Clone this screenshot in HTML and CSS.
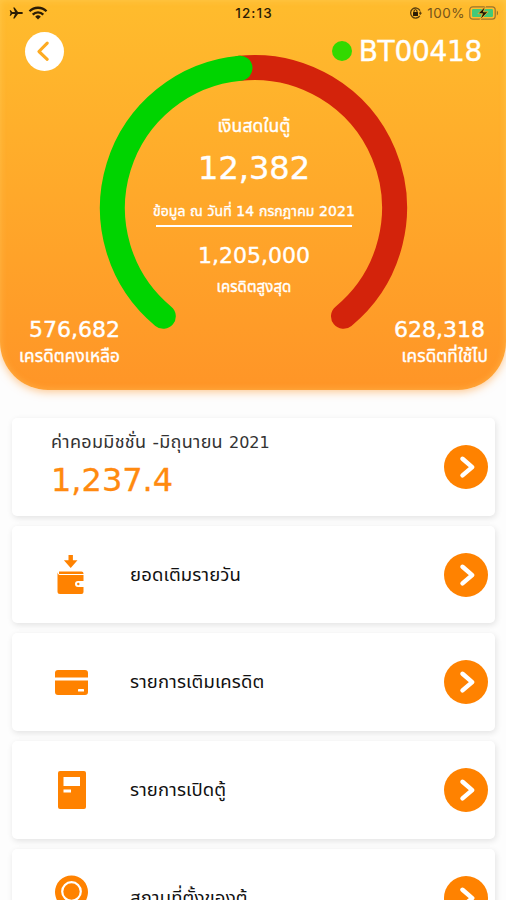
FILE: index.html
```
<!DOCTYPE html>
<html lang="th">

<head>
    <meta charset="UTF-8">
    <meta name="viewport" content="width=device-width, initial-scale=1.0">
    <title>BT00418</title>
    <link rel="stylesheet" href="styles.css">
</head>

<body>
    <header class="header">
        <div class="status-bar">
            <div class="status-left">
                <svg width="15" height="12" viewBox="0 0 15 12"><path d="M14 6C14 5.3 13 5 12 5H9L5.6.5H4.2L6 5H3.2L1.8 3.3H.7L1.5 6 .7 8.7h1.1L3.2 7H6l-1.8 4.5h1.4L9 7h3c1 0 2-.3 2-1z" fill="#2b1c05"/></svg>
                <svg width="20" height="14" viewBox="0 0 20 14" fill="none" stroke="#2b1c05" stroke-width="2.3"><path d="M1.5 5.3a12 12 0 0 1 17 0M4.7 8.6a7.5 7.5 0 0 1 10.6 0"/><path d="M7.2 10.7a4 4 0 0 1 5.6 0L10 13.5z" fill="#2b1c05" stroke="none"/></svg>
            </div>
            <div class="clock">12:13</div>
            <div class="status-right">
                <svg width="14" height="12" viewBox="0 0 14 12"><path d="M10.8 8.8a5 5 0 1 1 .2-5.2M11.3 4.6v3" fill="none" stroke="#5b400e" stroke-width="1.3"/><path d="M9.6 5.7h3.6l-1.8 2.1z" fill="#5b400e"/><rect x="4" y="5" width="5" height="4" rx=".6" fill="#2b1c05"/><path d="M5 5.5V4.2a1.5 1.5 0 0 1 3 0v1.3" fill="none" stroke="#2b1c05"/></svg>
                <span class="percent">100%</span>
                <svg width="30" height="14" viewBox="0 0 30 14"><rect x=".8" y=".8" width="25.4" height="12.4" rx="3" fill="none" stroke="#9b742b" stroke-width="1.2"/><rect x="3" y="3" width="21" height="8" rx="1.2" fill="#43c977"/><path d="M27.8 4.5c1.7.8 1.7 4.2 0 5z" fill="#9b742b"/><path d="M16.6 0 9 7.7h4.5L11 14l8-8.2h-4.6z" fill="#1b1608" stroke="#ffba2d" stroke-width=".8"/></svg>
            </div>
        </div>

        <div class="title-row">
            <button class="back-btn" aria-label="back">
                <svg width="39" height="39" viewBox="0 0 40 40"><path d="M22.8 11.5 14.3 20l8.5 8" fill="none" stroke="#fdab22" stroke-width="3.2" stroke-linecap="round" stroke-linejoin="round"/></svg>
            </button>
            <div class="machine"><span class="online-dot"></span><span class="machine-id">BT00418</span></div>
        </div>

        <div class="gauge">
            <svg class="gauge-ring" width="306" height="274" viewBox="0 0 306 274" fill="none" stroke-width="25" stroke-linecap="round">
                <path d="M139 13.2A140.5 140.5 0 0 1 242.5 261.3" stroke="#d3230b"/>
                <path d="M62.3 261.3A140.5 140.5 0 0 1 139 13.2" stroke="#00d400"/>
            </svg>
            <div class="gauge-info">
                <p class="cash-label">เงินสดในตู้</p>
                <p class="cash">12,382</p>
                <p class="date">ข้อมูล ณ วันที่ 14 กรกฎาคม 2021</p>
                <p class="limit">1,205,000</p>
                <p class="limit-label">เครดิตสูงสุด</p>
            </div>
        </div>

        <div class="credits">
            <div class="credit">
                <p class="credit-value">576,682</p>
                <p class="credit-label">เครดิตคงเหลือ</p>
            </div>
            <div class="credit">
                <p class="credit-value used-value">628,318</p>
                <p class="credit-label">เครดิตที่ใช้ไป</p>
            </div>
        </div>
    </header>

    <main class="menu">
        <div class="card">
            <div class="commission">
                <p class="commission-label">ค่าคอมมิชชั่น -มิถุนายน <span class="year">2021</span></p>
                <p class="commission-value">1,237.4</p>
            </div>
            <svg class="arrow" viewBox="0 0 44 44"><circle cx="22" cy="22" r="22"/><path d="m18.5 13.8 9.7 8.3-9.7 8.3"/></svg>
        </div>
        <div class="card">
            <svg class="icon" width="36" height="44" viewBox="0 0 36 44" fill="#ff8200"><path d="M15.5 2h4.4v5.3h4.6L17.7 15l-6.8-7.7h4.6z"/><path d="M6 18.5h22.5a2 2 0 0 1 2 2v.6H6z"/><path d="M4.5 19v19.5A2.5 2.5 0 0 0 7 41h21.5a2 2 0 0 0 2-2v-5H25a3 3 0 0 1 0-6h5.5v-6H7c-1.5 0-2.5-1.5-2.5-3z"/><circle cx="25.3" cy="31" r="1.2"/></svg>
            <span class="card-text">ยอดเติมรายวัน</span>
            <svg class="arrow" viewBox="0 0 44 44"><circle cx="22" cy="22" r="22"/><path d="m18.5 13.8 9.7 8.3-9.7 8.3"/></svg>
        </div>
        <div class="card">
            <svg class="icon" width="36" height="44" viewBox="0 0 36 44" fill="#ff8200"><path d="M5 10h27a3 3 0 0 1 3 3v4.5H2V13a3 3 0 0 1 3-3zM2 20.5h33V32a3 3 0 0 1-3 3H5a3 3 0 0 1-3-3z"/><rect x="25" y="29" width="6" height="2.5" rx=".5" fill="#fff"/></svg>
            <span class="card-text">รายการเติมเครดิต</span>
            <svg class="arrow" viewBox="0 0 44 44"><circle cx="22" cy="22" r="22"/><path d="m18.5 13.8 9.7 8.3-9.7 8.3"/></svg>
        </div>
        <div class="card">
            <svg class="icon" width="36" height="44" viewBox="0 0 36 44"><rect x="5" y="3" width="28" height="38" rx="2" fill="#ff8200"/><path d="M10.5 9H27v9H10.5zM10.5 21.5H18v3h-7.5z" fill="#fff"/></svg>
            <span class="card-text">รายการเปิดตู้</span>
            <svg class="arrow" viewBox="0 0 44 44"><circle cx="22" cy="22" r="22"/><path d="m18.5 13.8 9.7 8.3-9.7 8.3"/></svg>
        </div>
        <div class="card">
            <svg class="icon" width="36" height="44" viewBox="0 0 36 44"><path d="M18.5-.5A16.5 16.5 0 0 1 35 16C35 27 24 36 18.5 44 13 36 2 27 2 16A16.5 16.5 0 0 1 18.5-.5z" fill="#ff8200"/><circle cx="18.5" cy="15.5" r="9.3" fill="none" stroke="#fff" stroke-width="2.2"/></svg>
            <span class="card-text">สถานที่ตั้งของตู้</span>
            <svg class="arrow" viewBox="0 0 44 44"><circle cx="22" cy="22" r="22"/><path d="m18.5 13.8 9.7 8.3-9.7 8.3"/></svg>
        </div>
    </main>
</body>

</html>
```
FILE: styles.css
```
* {
    box-sizing: border-box;
}

body {
    margin: 0;
    height: 900px;
    overflow: hidden;
    background: #fdfdfd;
    color: #222;
    font-family: "DejaVu Sans", "Noto Sans", "Noto Sans Thai", sans-serif;
}

p {
    margin: 0;
    white-space: nowrap;
}

svg {
    display: block;
    flex-shrink: 0;
    overflow: visible;
}

.header {
    height: 390px;
    border-radius: 0 0 48px 48px;
    background: linear-gradient(#ffbc2d, #ff9527);
    box-shadow: 0 2px 9px rgba(255, 149, 39, 0.5), inset 0 0 7px rgba(255, 220, 120, 0.4);
    color: #fff;
    -webkit-text-stroke: 0.4px;
}

.status-bar {
    display: grid;
    grid-template-columns: 1fr auto 1fr;
    align-items: center;
    height: 26px;
    padding: 0 7px 0 9px;
    color: #2b1c05;
    -webkit-text-stroke: 0;
}

.status-left,
.status-right {
    display: flex;
    align-items: center;
    gap: 4px;
}

.status-right {
    justify-content: flex-end;
}

.clock {
    font: 500 13.5px/26px Inter, sans-serif;
    letter-spacing: 1.1px;
}

.percent {
    font: 13.5px/26px Inter, sans-serif;
    letter-spacing: 0.5px;
    color: #76531a;
}

.title-row {
    display: flex;
    align-items: center;
    justify-content: space-between;
    height: 50px;
    padding: 0 24px 0 25px;
}

.back-btn {
    width: 39px;
    height: 39px;
    padding: 0;
    border: none;
    border-radius: 50%;
    background: #fff;
}

.machine {
    display: flex;
    align-items: center;
    gap: 7px;
}

.online-dot {
    width: 20px;
    height: 20px;
    border-radius: 50%;
    background: #32d900;
}

.machine-id {
    padding-top: 2px;
    font-size: 28px;
    line-height: 40px;
    letter-spacing: -0.3px;
}

/* ring and its figures share one grid cell */
.gauge {
    display: grid;
    width: 306px;
    height: 274px;
    margin: -21px 0 0 101px;
}

.gauge-ring,
.gauge-info {
    grid-area: 1 / 1;
}

.gauge-info {
    display: flex;
    flex-direction: column;
    align-items: center;
    padding-top: 57px;
}

.cash-label {
    font-size: 17.5px;
    line-height: 28px;
    letter-spacing: 0.1px;
}

.cash {
    font-size: 32px;
    line-height: 56px;
}

.date {
    width: 196px;
    height: 31px;
    display: flex;
    justify-content: center;
    border-bottom: 2px solid #fff;
    font-size: 14px;
    line-height: 30px;
    letter-spacing: 0.1px;
}

.limit {
    font-size: 22px;
    line-height: 58px;
}

.limit-label {
    font-size: 15px;
    line-height: 4px;
    letter-spacing: 0.1px;
}

.credits {
    display: flex;
    justify-content: space-between;
    margin-top: -13px;
    padding: 0 18px 0 19px;
}

.credit {
    text-align: right;
}

.credit-value {
    font-size: 22px;
    line-height: 28px;
}

.used-value {
    padding-right: 3px;
}

.credit-label {
    font-size: 17.2px;
    line-height: 24px;
    letter-spacing: 0.1px;
}

.menu {
    display: flex;
    flex-direction: column;
    gap: 10px;
    padding: 28px 11px 0 12px;
}

.card {
    display: flex;
    align-items: center;
    flex-shrink: 0;
    height: 97.7px;
    padding: 0 7px 0 40px;
    border-radius: 5px;
    background: #fff;
    box-shadow: 1px 2px 6px rgba(0, 0, 0, 0.11);
}

.commission {
    margin: -9px 0 0 -1px;
}

.commission-label {
    font-size: 18px;
    line-height: 34px;
    letter-spacing: 0.3px;
    color: #333;
}

.year {
    font-size: 16px;
    letter-spacing: 0;
}

.commission-value {
    font-size: 32px;
    line-height: 40px;
    color: #ff8a0f;
    -webkit-text-stroke: 0.3px;
}

.icon {
    margin-left: 1px;
}

.card-text {
    margin-left: 41px;
    font-size: 18.5px;
    line-height: 28px;
    letter-spacing: 0.15px;
    color: #111;
    white-space: nowrap;
}

.arrow {
    width: 44px;
    height: 44px;
    margin-left: auto;
    fill: #ff8200;
}

.arrow path {
    fill: none;
    stroke: #fff;
    stroke-width: 4.5;
    stroke-linecap: round;
    stroke-linejoin: round;
}
```
